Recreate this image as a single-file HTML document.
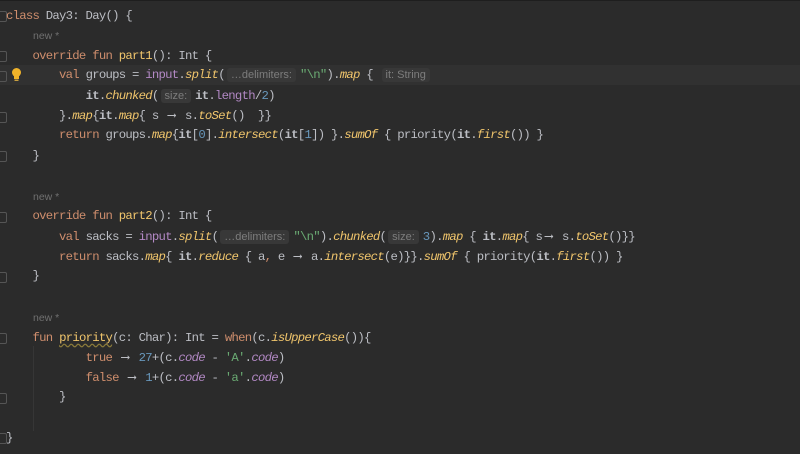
<!DOCTYPE html>
<html><head><meta charset="utf-8"><style>
html,body{margin:0;padding:0;}
body{width:800px;height:454px;background:#2b2b2b;overflow:hidden;position:relative;font-family:"Liberation Mono",monospace;font-size:12.3px;letter-spacing:-0.75px;color:#bcbec4;border-top:1px solid #1e1e1e;box-sizing:border-box;}
.l{position:absolute;left:6px;white-space:pre;line-height:20px;height:20px;}
.k{color:#cf8e6d}.f{color:#f0c56c}.i{font-style:italic;color:#f0c56c}.p{color:#b389c5}.pi{color:#b389c5;font-style:italic}
.s{color:#6aab73}.n{color:#6897bb}.b{font-weight:bold}
.a{display:inline-block;width:13.2px;text-align:center;letter-spacing:0;}
.h{font-family:"Liberation Sans",sans-serif;font-size:11px;letter-spacing:0;color:#7d7d7d;background:#383838;border-radius:3px;padding:1px 4px;margin:0 4px 0 2px;}
.new{font-family:"Liberation Sans",sans-serif;font-size:10.5px;letter-spacing:0;color:#707070;}
.hl{position:absolute;left:0;right:0;top:64px;height:20px;background:#313131;}
.g{position:absolute;left:0;width:6px;height:9px;border:1px solid #555;border-left:none;border-radius:0 2px 2px 0;}
.guide{position:absolute;left:33px;width:1px;background:#363636;}
.wave{text-decoration:underline wavy #8a7a3a;text-underline-offset:2px;}
</style></head><body>
<div class="hl"></div>
<div class="guide" style="top:345px;height:85px"></div>
<div class="g" style="top:10px"></div>
<div class="g" style="top:50px"></div>
<div class="g" style="top:70px"></div>
<div class="g" style="top:111px"></div>
<div class="g" style="top:150px"></div>
<div class="g" style="top:211px"></div>
<div class="g" style="top:271px"></div>
<div class="g" style="top:332px"></div>
<div class="g" style="top:392px"></div>
<div class="g" style="top:432px"></div>
<svg style="position:absolute;left:10px;top:66px" width="13" height="15" viewBox="0 0 13 15"><circle cx="6.5" cy="5.5" r="4.5" fill="#f0b32a"/><rect x="4" y="9" width="5" height="3" fill="#f0b32a"/><rect x="4.5" y="12.5" width="4" height="1.5" fill="#c9a040"/></svg>

<div class="l" style="top:5px"><span class="k">class</span> Day3: Day() {</div>
<div class="l new" style="top:25px;left:33px">new *</div>
<div class="l" style="top:45px">    <span class="k">override fun</span> <span class="f">part1</span>(): Int {</div>
<div class="l" style="top:64px">        <span class="k">val</span> groups = <span class="p">input</span>.<span class="i">split</span>(<span class="h">…delimiters:</span><span class="s">"\n"</span>).<span class="i">map</span> { <span class="h">it: String</span></div>
<div class="l" style="top:85px">            <span class="b">it</span>.<span class="i">chunked</span>(<span class="h">size:</span><span class="b">it</span>.<span class="p">length</span>/<span class="n">2</span>)</div>
<div class="l" style="top:105px">        }.<span class="i">map</span>{<span class="b">it</span>.<span class="i">map</span>{ s <span class="a">⟶</span> s.<span class="i">toSet</span>()  }}</div>
<div class="l" style="top:124px">        <span class="k">return</span> groups.<span class="i">map</span>{<span class="b">it</span>[<span class="n">0</span>].<span class="i">intersect</span>(<span class="b">it</span>[<span class="n">1</span>]) }.<span class="i">sumOf</span> { priority(<span class="b">it</span>.<span class="i">first</span>()) }</div>
<div class="l" style="top:145px">    }</div>
<div class="l new" style="top:186px;left:33px">new *</div>
<div class="l" style="top:205px">    <span class="k">override fun</span> <span class="f">part2</span>(): Int {</div>
<div class="l" style="top:226px">        <span class="k">val</span> sacks = <span class="p">input</span>.<span class="i">split</span>(<span class="h">…delimiters:</span><span class="s">"\n"</span>).<span class="i">chunked</span>(<span class="h">size:</span><span class="n">3</span>).<span class="i">map</span> { <span class="b">it</span>.<span class="i">map</span>{ s<span class="a">⟶</span> s.<span class="i">toSet</span>()}}</div>
<div class="l" style="top:246px">        <span class="k">return</span> sacks.<span class="i">map</span>{ <span class="b">it</span>.<span class="i">reduce</span> { a<span class="k">,</span> e <span class="a">⟶</span> a.<span class="i">intersect</span>(e)}}.<span class="i">sumOf</span> { priority(<span class="b">it</span>.<span class="i">first</span>()) }</div>
<div class="l" style="top:265px">    }</div>
<div class="l new" style="top:307px;left:33px">new *</div>
<div class="l" style="top:327px">    <span class="k">fun</span> <span class="f wave">priority</span>(c: Char): Int = <span class="k">when</span>(c.<span class="i">isUpperCase</span>()){</div>
<div class="l" style="top:347px">            <span class="k">true</span> <span class="a">⟶</span> <span class="n">27</span>+(c.<span class="pi">code</span> - <span class="s">'A'</span>.<span class="pi">code</span>)</div>
<div class="l" style="top:367px">            <span class="k">false</span> <span class="a">⟶</span> <span class="n">1</span>+(c.<span class="pi">code</span> - <span class="s">'a'</span>.<span class="pi">code</span>)</div>
<div class="l" style="top:386px">        }</div>
<div class="l" style="top:427px">}</div>
</body></html>
